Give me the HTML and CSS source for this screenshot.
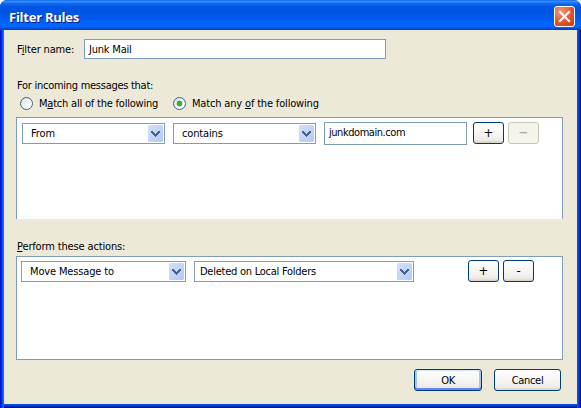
FILE: index.html
```
<!DOCTYPE html>
<html lang="en">
<head>
<meta charset="utf-8">
<title>Filter Rules</title>
<link rel="stylesheet" href="styles.css">
</head>
<body>
<svg class="defs" width="0" height="0" aria-hidden="true">
  <linearGradient id="arrow-bg" x1="0" y1="0" x2="1" y2="1"><stop offset="0" stop-color="#d3e0fe"/><stop offset="1" stop-color="#b2c9f8"/></linearGradient>
  <symbol id="arrow" viewBox="0 0 15 17"><rect width="15" height="17" rx="1.5" fill="url(#arrow-bg)"/><path d="M3 6h2v1h1v1h1v1h1v-1h1v-1h1v-1h2v2h-1v1h-1v1h-1v1h-1v1h-1v-1h-1v-1h-1v-1h-1v-1h-1z" fill="#4d6185" shape-rendering="crispEdges"/></symbol>
</svg>
<div class="window">
  <header class="titlebar">
    <h1>Filter Rules</h1>
    <button class="close" aria-label="Close"><svg width="21" height="21" viewBox="0 0 21 21"><path d="M6 6l9 9M15 6l-9 9" stroke="#fff" stroke-width="2.2" stroke-linecap="square"/></svg></button>
  </header>
  <main class="content">
    <div class="name-row"><label class="t-name">F<u>i</u>lter name:</label><div class="field name-field t-junk">Junk Mail</div></div>
    <div class="heading t-incoming">For incoming messages that:</div>
    <div class="radios">
      <span class="radio"></span><span class="all t-all">M<u>a</u>tch all of the following</span>
      <span class="radio on"></span><span class="t-any">Match any <u>o</u>f the following</span>
    </div>
    <section class="box rules">
      <div class="select s-from"><span class="t-from">From</span><svg width="15" height="17"><use href="#arrow"/></svg></div>
      <div class="select s-contains"><span class="t-contains">contains</span><svg width="15" height="17"><use href="#arrow"/></svg></div>
      <div class="field value-field t-domain">junkdomain.com</div>
      <button class="btn small plus">+</button>
      <button class="btn small disabled" disabled>−</button>
    </section>
    <div class="heading perform t-perform"><u>P</u>erform these actions:</div>
    <section class="box actions">
      <div class="select s-move"><span class="t-move">Move Message to</span><svg width="15" height="17"><use href="#arrow"/></svg></div>
      <div class="select s-deleted"><span class="t-deleted">Deleted on Local Folders</span><svg width="15" height="17"><use href="#arrow"/></svg></div>
      <button class="btn small plus">+</button>
      <button class="btn small">-</button>
    </section>
    <footer class="footer"><button class="btn default"><span class="t-ok">OK</span></button><button class="btn cancel"><span class="t-cancel">Cancel</span></button></footer>
  </main>
</div>
</body>
</html>
```
FILE: styles.css
```
* { box-sizing: border-box; }
body { margin: 0; background: #fff; font: 11px/13px "DejaVu Sans Condensed", "DejaVu Sans", sans-serif; font-stretch: condensed; color: #000; overflow: hidden; }
.defs { position: absolute; }
.window { width: 581px; height: 408px; display: flex; flex-direction: column; border-radius: 7px 7px 0 0; overflow: hidden;
  background: linear-gradient(90deg, #0019cf 0 1px, #0831d9 1px 2px, #0a50ea 2px 3px, #166aee 3px 4px, #0855dd 4px 578px, #0441d8 578px 579px, #0029c0 579px 580px, #00138c 580px); }
.titlebar { height: 30px; flex: none; display: flex; align-items: center; justify-content: space-between; padding: 3px 6px 0 9px;
  background: linear-gradient(#0058e6 0, #3a93ff 1px, #2a85f8 2px, #0a66ee 4px, #0055e1 7px, #0054e3 13px, #005cf5 19px, #0066ff 24px, #0064fa 27px, #0047d0 29px, #003dbf 30px); }
h1 { margin: 0; font: bold 13px/16px "Open Sans", "Noto Sans", sans-serif; letter-spacing: -0.25px; color: #fff; text-shadow: 1px 1px 0 #0a1883; white-space: nowrap; }
.close { width: 21px; height: 21px; padding: 0; border: 1px solid #fff; border-radius: 3px; background: radial-gradient(circle at 30% 25%, #f0997c, #e2542c 55%, #c33a12); }
.close svg { display: block; margin: -1px; }
.content { flex: 1; margin: 0 4px 4px; padding: 9px 14px 0 12px; background: #ece9d8; box-shadow: 0 1px #0855dd, 0 2px #0441d8, 0 3px #0029c0, 0 4px #00138c; white-space: nowrap; }
u { text-decoration: underline; text-underline-offset: 1px; text-decoration-thickness: 1px; }
.field { border: 1px solid #7f9db9; background: #fff; }
.name-row { display: flex; align-items: center; height: 20px; padding-left: 1px; }
.name-row label { width: 67px; }
.name-field { width: 302px; height: 20px; padding: 3px 4px; }
.heading { margin-top: 20px; height: 13px; padding-left: 1px; }
.radios { display: flex; align-items: center; height: 13px; margin-top: 5px; padding-left: 4px; }
.radio { width: 13px; height: 13px; flex: none; border: 1px solid #3e628c; border-radius: 50%; margin-right: 6px; background: linear-gradient(135deg, #dcdcd7, #fff 80%); }
.radio.on { background: radial-gradient(circle, #2fb52f 0 2px, #21a121 2.5px, transparent 3.2px), linear-gradient(135deg, #dcdcd7, #fff 80%); }
.all { width: 134px; }
.box { display: flex; align-items: flex-start; width: 547px; border: 1px solid #7f9db9; background: #fff; }
.rules { height: 102px; border-bottom: 0; margin-top: 7px; padding: 4px 0 0 5px; }
.actions { height: 104px; margin-top: 3px; padding: 3px 0 0 4px; }
.perform { margin-top: 21px; }
.select { height: 21px; margin-top: 1px; margin-right: 8px; border: 1px solid #7f9db9; background: #fff; display: flex; align-items: center; justify-content: space-between; padding: 0 1px 0 8px; }
.select svg { flex: none; }
.s-from, .s-contains { width: 143px; }
.s-move { width: 165px; }
.s-deleted { width: 220px; margin-right: 54px; padding-left: 5px; }
.value-field { width: 143px; height: 23px; margin-right: 6px; padding: 3px 4px; }
.btn { width: 67px; height: 22px; padding: 0; border: 1px solid #003c74; border-radius: 3px; background: linear-gradient(#fff, #f3f2ee 65%, #ecebe6 86%, #d6d0c5); font: inherit; color: #000; box-shadow: 0 0 1px #fff; }
.small { width: 31px; font: 13px/18px "DejaVu Sans Condensed", sans-serif; }
.plus { margin-right: 4px; }
.disabled { border-color: #c9c7ba; background: #f5f4ea; color: #a1a192; }
.default { width: 68px; box-shadow: inset 0 1px #cee7ff, inset 0 -2px #6982ee, inset 2px 0 #a9c2f0, inset -2px 0 #a9c2f0; }
.footer { display: flex; justify-content: flex-end; gap: 12px; margin-top: 9px; padding-right: 2px; }

.t-name { letter-spacing: -0.15px; }
.t-junk { letter-spacing: -0.2px; }
.t-incoming { letter-spacing: -0.27px; }
.t-all { letter-spacing: -0.21px; }
.t-any { letter-spacing: -0.17px; }
.t-from { letter-spacing: -0.1px; }
.t-contains { letter-spacing: -0.15px; }
.t-domain { letter-spacing: -0.45px; }
.t-perform { letter-spacing: -0.15px; }
.t-move { letter-spacing: -0.15px; }
.t-deleted { letter-spacing: -0.25px; }
.t-ok { letter-spacing: -0.5px; }
.t-cancel { letter-spacing: -0.3px; }
```
